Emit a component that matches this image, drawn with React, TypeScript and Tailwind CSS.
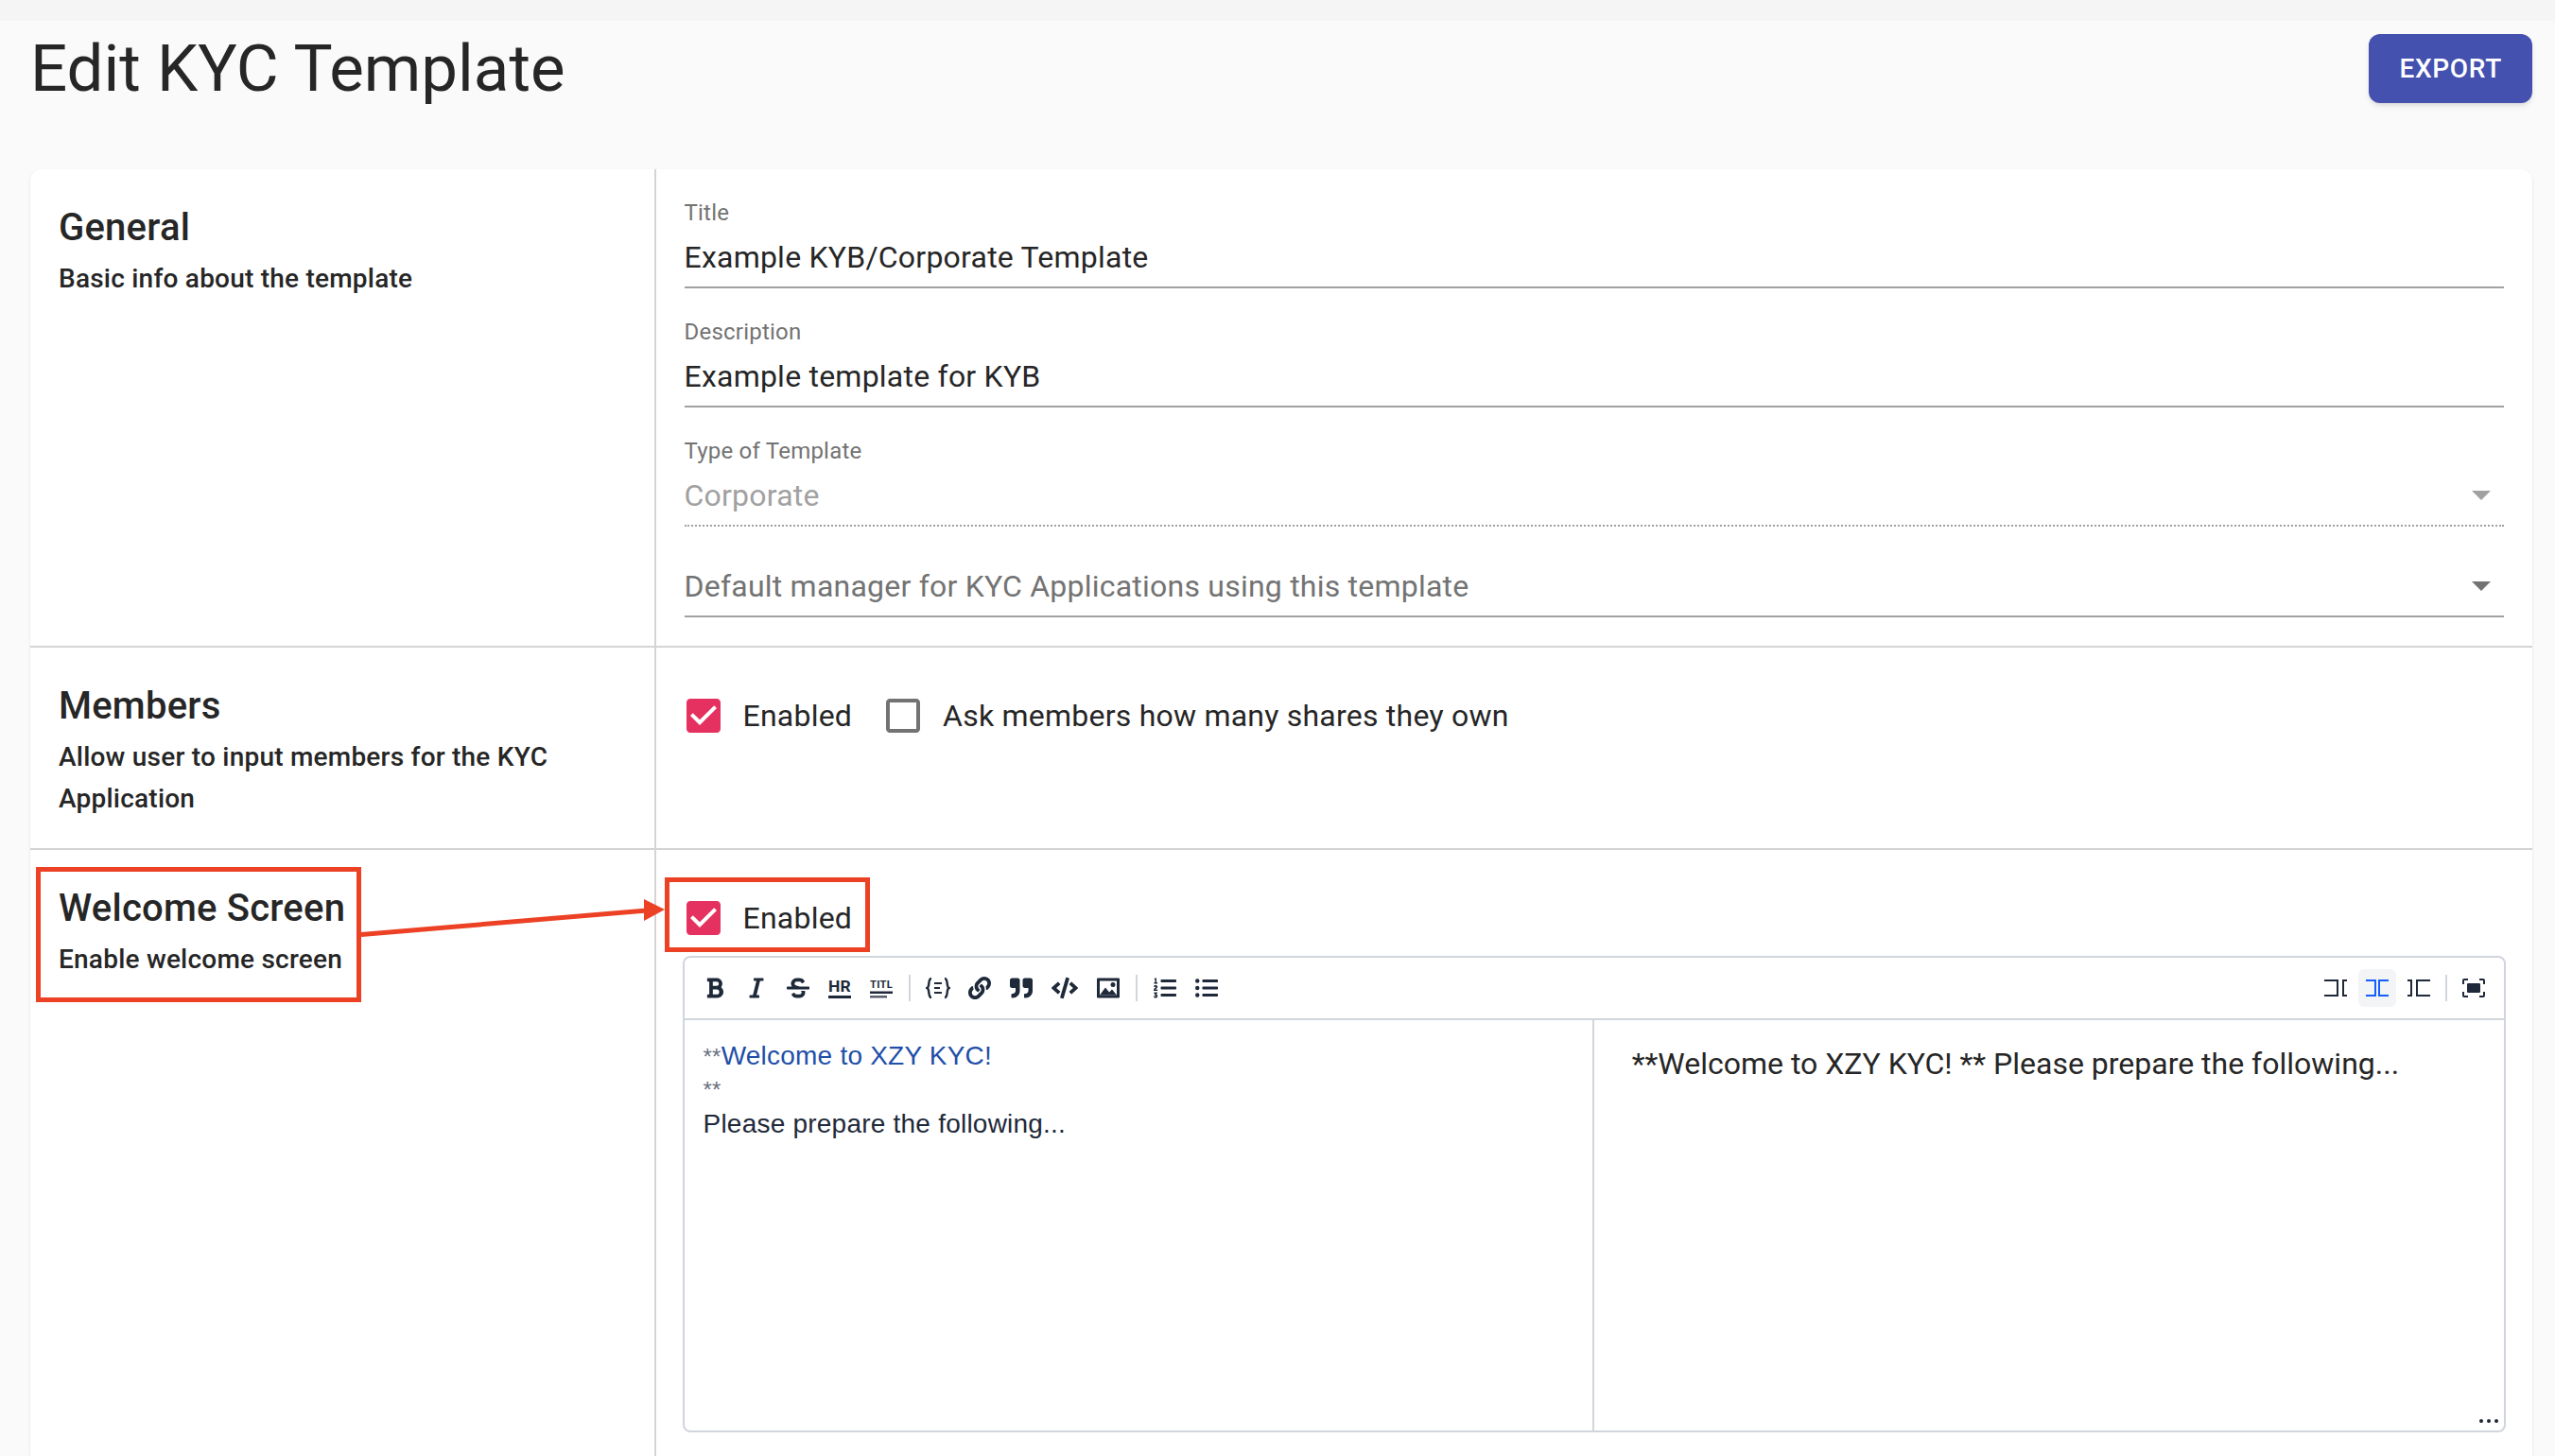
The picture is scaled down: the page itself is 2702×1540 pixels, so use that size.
import React from 'react';
import { FaBold, FaItalic, FaStrikethrough, FaLink, FaQuoteRight, FaCode, FaListOl, FaListUl } from 'react-icons/fa';

const Field = ({ label, value, muted, dotted }: { label?: string; value: string; muted?: string; dotted?: boolean }) => (
  <div>
    {label && <div className="pt-0.5 text-2xl leading-7 text-neutral-500">{label}</div>}
    <div className={`flex h-16 items-center justify-between pt-0.5 text-[32px] ${muted ?? 'text-neutral-800'}`}>
      <span>{value}</span>
      {muted && (
        <svg viewBox="0 0 20 10" className={`w-5 h-2.5 mr-3.5 ${dotted ? 'text-neutral-400' : 'text-neutral-500'}`}>
          <path d="M0 0h20L10 10z" fill="currentColor" />
        </svg>
      )}
    </div>
    <div className={dotted ? 'border-b-2 border-dotted border-neutral-400' : 'border-b-2 border-neutral-400'} />
  </div>
);

const Checkbox = ({ checked, label }: { checked?: boolean; label: string }) => (
  <label className="flex h-11 items-center gap-6 text-[32px] text-neutral-800">
    {checked ? (
      <svg viewBox="3 3 18 18" className="size-9 text-[#e5315f]">
        <path fill="currentColor" d="M19 3H5c-1.11 0-2 .9-2 2v14c0 1.1.89 2 2 2h14c1.11 0 2-.9 2-2V5c0-1.1-.89-2-2-2zm-9 14l-5-5 1.41-1.41L10 14.17l7.59-7.59L19 8l-9 9z" />
      </svg>
    ) : (
      <svg viewBox="3 3 18 18" className="size-9 text-neutral-500">
        <path fill="currentColor" d="M19 5v14H5V5h14m0-2H5c-1.1 0-2 .9-2 2v14c0 1.1.9 2 2 2h14c1.1 0 2-.9 2-2V5c0-1.1-.9-2-2-2z" />
      </svg>
    )}
    <span>{label}</span>
  </label>
);

const Section = ({ title, text, children, last }: { title: string; text: string; children: React.ReactNode; last?: boolean }) => (
  <div className={last ? 'flex flex-1' : 'flex border-b-2 border-neutral-300'}>
    <div className="w-1/4 shrink-0 border-r-2 border-neutral-300 p-7.5">
      <h2 className="text-[40px] leading-16 font-medium text-neutral-800">{title}</h2>
      <p className="text-[28px] leading-11 font-medium text-neutral-800">{text}</p>
    </div>
    <div className="flex-1 min-w-0">{children}</div>
  </div>
);

const ToolButton = ({ children, wide }: { children: React.ReactNode; wide?: boolean }) => (
  <button className={`flex h-10 items-center justify-center text-gray-800 ${wide ? 'w-12' : 'w-11'}`}>{children}</button>
);

const ToolSep = () => (
  <div className="flex w-4 justify-center">
    <div className="h-7 w-0.5 bg-gray-300" />
  </div>
);

// the split / view modes on the right of the toolbar
const ViewIcon = ({ mode }: { mode: 'edit' | 'live' | 'preview' }) => (
  <svg viewBox="0 0 24 18" className="w-6 h-4.5" fill="none" stroke="currentColor" strokeWidth="2">
    {mode === 'edit' && <path d="M0 1h14v16H0M24 1h-4v16h4" />}
    {mode === 'live' && <path d="M0 1h10v16H0M24 1H14v16h10" />}
    {mode === 'preview' && <path d="M0 1h4v16H0M24 1H10v16h14" />}
  </svg>
);

const Toolbar = () => (
  <div className="flex h-16.5 shrink-0 items-center justify-between border-b-2 border-gray-300 pl-2.5 pr-3">
    <div className="flex items-center">
      <ToolButton><FaBold className="size-6" /></ToolButton>
      <ToolButton><FaItalic className="size-6" /></ToolButton>
      <ToolButton><FaStrikethrough className="size-6" /></ToolButton>
      <ToolButton>
        <svg viewBox="0 0 24 24" className="size-6">
          <text x="0" y="16" textLength="24" lengthAdjust="spacingAndGlyphs" fontSize="17" fontWeight="700" fontFamily="Roboto, sans-serif" fill="currentColor">HR</text>
          <rect x="0" y="20" width="24" height="3" fill="currentColor" />
        </svg>
      </ToolButton>
      <ToolButton>
        <svg viewBox="0 0 24 24" className="size-6">
          <text x="0" y="12" textLength="24" lengthAdjust="spacingAndGlyphs" fontSize="10" fontWeight="700" fontFamily="Roboto, sans-serif" fill="currentColor">TITL</text>
          <rect x="0" y="15.500" width="24" height="2.500" fill="currentColor" />
          <rect x="0" y="20" width="18" height="2.500" fill="currentColor" opacity="0.75" />
        </svg>
      </ToolButton>
      <ToolSep />
      <ToolButton>
        <svg viewBox="0 0 26 24" className="w-6.5 h-6" fill="none" stroke="currentColor" strokeWidth="2.400">
          <path d="M6 2c-4 0-1.500 9-4.500 10C4.500 13 2 22 6 22M20 2c4 0 1.500 9 4.500 10-3 1-.5 10-4.500 10" />
          <path d="M9 7h8M9 12h6M9 17h8" strokeWidth="1.800" />
        </svg>
      </ToolButton>
      <ToolButton><FaLink className="size-6" /></ToolButton>
      <ToolButton><FaQuoteRight className="size-6" /></ToolButton>
      <ToolButton wide><FaCode className="size-7" /></ToolButton>
      <ToolButton>
        <svg viewBox="0 0 24 21" className="w-6 h-5.5" fill="currentColor">
          <path fillRule="evenodd" d="M1 0h22a1 1 0 0 1 1 1v19a1 1 0 0 1-1 1H1a1 1 0 0 1-1-1V1a1 1 0 0 1 1-1zM3 3v15h18V3z" />
          <path d="M3 18l6-8 4 5 3-3 5 6z" />
          <circle cx="17" cy="7" r="2.500" />
        </svg>
      </ToolButton>
      <ToolSep />
      <ToolButton><FaListOl className="size-6" /></ToolButton>
      <ToolButton><FaListUl className="size-6" /></ToolButton>
    </div>
    <div className="flex items-center gap-1">
      <button className="flex size-10 items-center justify-center text-gray-800"><ViewIcon mode="edit" /></button>
      <button className="flex size-10 items-center justify-center rounded-md bg-gray-100 text-blue-600"><ViewIcon mode="live" /></button>
      <button className="flex size-10 items-center justify-center text-gray-800"><ViewIcon mode="preview" /></button>
      <div className="flex w-2.5 justify-center"><div className="h-7 w-0.5 bg-gray-300" /></div>
      <button className="flex size-10 items-center justify-center text-gray-800">
        <svg viewBox="0 0 24 20" className="w-6 h-5" fill="none" stroke="currentColor" strokeWidth="2">
          <path d="M1 6V2a1 1 0 0 1 1-1h4M18 1h4a1 1 0 0 1 1 1v4M23 14v4a1 1 0 0 1-1 1h-4M6 19H2a1 1 0 0 1-1-1v-4" />
          <rect x="5" y="5" width="14" height="10" rx="1" fill="currentColor" stroke="none" />
        </svg>
      </button>
    </div>
  </div>
);

const Editor = () => (
  <div className="relative -mx-0.5 mt-4.5 flex h-126 flex-col rounded-lg border-2 border-gray-300">
    <Toolbar />
    <div className="flex flex-1">
      <div className="w-1/2 border-r-2 border-gray-300 px-5 pt-5 font-['Liberation_Sans',sans-serif] text-[28px] leading-9 text-gray-800">
        <div>
          <span className="text-2xl text-gray-500">**</span>
          <span className="text-[#1f4fa8]">Welcome to XZY KYC!</span>
        </div>
        <div className="text-2xl leading-9 text-gray-500">**</div>
        <div>Please prepare the following...</div>
      </div>
      <div className="flex-1 pl-10 pr-9 pt-6.5 text-[32px] leading-10 tracking-normal text-neutral-800">
        **Welcome to XZY KYC! ** Please prepare the following...
      </div>
    </div>
    <div className="absolute bottom-2 right-1.5 flex gap-1">
      <div className="size-1 rounded-full bg-gray-800" />
      <div className="size-1 rounded-full bg-gray-800" />
      <div className="size-1 rounded-full bg-gray-800" />
    </div>
  </div>
);

export default function App() {
  return (
    <div className="relative flex h-screen flex-col overflow-hidden bg-neutral-50 font-['Roboto',sans-serif] tracking-[0.014em]">
      <div className="h-5.5 shrink-0 bg-neutral-100" />
      <div className="flex flex-1 min-h-0 flex-col pl-8 pr-6">
        <div className="mt-3.5 mb-17.5 flex h-18.25 shrink-0 items-center justify-between">
          <h1 className="text-[69px] font-normal tracking-normal text-neutral-800">Edit KYC Template</h1>
          <button className="flex h-full items-center rounded-xl bg-[#4551af] px-8 text-[28px] font-medium tracking-wide text-white shadow-md">
            EXPORT
          </button>
        </div>
        <div className="flex flex-1 flex-col rounded-t-xl bg-white shadow-sm">
          <Section title="General" text="Basic info about the template">
            <div className="flex flex-col gap-7.5 p-7.5">
              <Field label="Title" value="Example KYB/Corporate Template" />
              <Field label="Description" value="Example template for KYB" />
              <Field label="Type of Template" value="Corporate" muted="text-neutral-400" dotted />
              <Field value="Default manager for KYC Applications using this template" muted="text-neutral-500" />
            </div>
          </Section>
          <Section title="Members" text="Allow user to input members for the KYC Application">
            <div className="ml-0.5 flex gap-9 px-7.5 pt-12.5">
              <Checkbox checked label="Enabled" />
              <Checkbox label="Ask members how many shares they own" />
            </div>
          </Section>
          <Section title="Welcome Screen" text="Enable welcome screen" last>
            <div className="px-7.5 pt-12.5">
              <div className="ml-0.5">
                <Checkbox checked label="Enabled" />
              </div>
              <Editor />
            </div>
          </Section>
        </div>
      </div>
      {/* red annotations drawn on top of the screenshot */}
      <svg viewBox="0 0 2702 1540" className="absolute inset-0 size-full pointer-events-none" fill="none" stroke="#ec4124" strokeWidth="5">
        <rect x="40.500" y="919.500" width="339" height="138" />
        <rect x="705.500" y="930.500" width="212" height="74" />
        <path d="M382 988.500L684 963" />
        <path d="M703 962L681 951v23z" fill="#ec4124" stroke="none" />
      </svg>
    </div>
  );
}
